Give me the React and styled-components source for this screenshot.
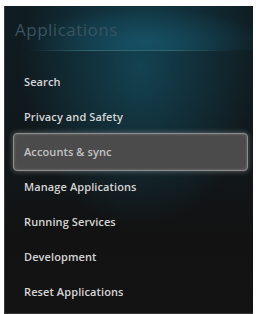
import React from "react";
import styled, { createGlobalStyle } from "styled-components";

const GlobalStyle = createGlobalStyle`
  html, body {
    margin: 0;
    padding: 0;
    background: #ffffff;
  }
`;

const items = [
  "Search",
  "Privacy and Safety",
  "Accounts & sync",
  "Manage Applications",
  "Running Services",
  "Development",
  "Reset Applications",
];

const App = () => {
  return (
    <>
      <GlobalStyle />
      <Page>
        <Screen>
          <Header>
            <Title>Applications</Title>
          </Header>
          <Divider />
          <List>
            {items.map((label, i) => (
              <Item key={label} $selected={i === 2}>
                {label}
              </Item>
            ))}
          </List>
        </Screen>
      </Page>
    </>
  );
};

const Page = styled.div`
  width: 256px;
  height: 314px;
  padding: 6px 3px 0 4px;
  box-sizing: border-box;
  background: #ffffff;
`;

const Screen = styled.div`
  height: 100%;
  display: flex;
  flex-direction: column;
  border-left: 1px solid #3a3a3a;
  border-bottom: 1px solid #3a3a3a;
  box-sizing: border-box;
  background:
    radial-gradient(ellipse 120px 160px at 135px 60px, rgba(20, 76, 94, 0.8), rgba(20, 76, 94, 0) 100%),
    linear-gradient(180deg, #0f1d23 0px, #111618 170px, #121212 230px, #131313 100%);
  font-family: "Open Sans", "DejaVu Sans", sans-serif;
`;

const Header = styled.div`
  height: 44px;
  display: flex;
  align-items: center;
  padding-left: 10px;
  background: radial-gradient(ellipse 120px 34px at 140px 36px, rgba(24, 88, 110, 0.7), rgba(24, 88, 110, 0) 100%);
`;

const Title = styled.div`
  font-size: 17px;
  color: #3a5360;
  letter-spacing: 0.5px;
  padding-top: 2px;
`;

const Divider = styled.div`
  height: 1px;
  margin: 0 20px 0 24px;
  background: linear-gradient(90deg, rgba(50, 110, 125, 0), #2f6675 30%, #2f6675 70%, rgba(50, 110, 125, 0));
`;

const List = styled.div`
  display: flex;
  flex-direction: column;
  padding: 13px 5px 0 8px;
`;

const Item = styled.div`
  height: ${(p) => (p.$selected ? "38px" : "35px")};
  margin: ${(p) => (p.$selected ? "-1.5px 0" : "0")};
  display: flex;
  align-items: center;
  padding-left: 10px;
  box-sizing: border-box;
  font-size: 11px;
  font-weight: 600;
  letter-spacing: 0.1px;
  color: ${(p) => (p.$selected ? "#c4c4c4" : "#d6d6d6")};
  border-radius: 4px;
  border: ${(p) => (p.$selected ? "1px solid #8e8e8e" : "1px solid transparent")};
  background: ${(p) => (p.$selected ? "#4b4b4b" : "transparent")};
  box-shadow: ${(p) =>
    p.$selected ? "0 0 5px 1px rgba(190, 190, 190, 0.35), inset 0 0 3px rgba(255,255,255,0.25)" : "none"};
`;

export default App;
